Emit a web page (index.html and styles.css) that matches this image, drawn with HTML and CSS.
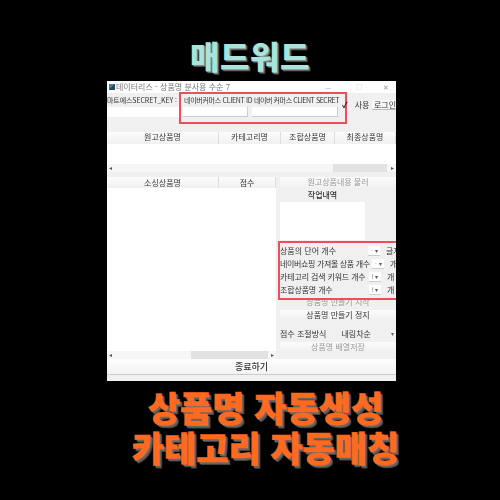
FILE: index.html
```html
<!DOCTYPE html>
<html lang="ko">
<head>
<meta charset="utf-8">
<title>매드워드</title>
<link rel="stylesheet" href="styles.css">
</head>
<body>
<h1 class="brand">매드워드</h1>
<main class="win">
  <div class="titlebar">
    <span class="appicon"></span>
    <span class="apptitle">데이터리스 - 상품명 분사용 수순 7</span>
    <span class="winctl"><span class="minbtn">—</span><span class="maxbtn"></span><span class="closebtn">✕</span></span>
  </div>
  <div class="keys">
    <div class="keycol keycol-a"><span class="lbl">마트에스SECRET_KEY :</span><span class="field field-a"></span></div>
    <div class="keycol keycol-b"><span class="lbl">네이버커머스 CLIENT ID</span><span class="field field-b"></span></div>
    <div class="keycol keycol-c"><span class="lbl">네이버 커머스 CLIENT SECRET</span><span class="field field-c"></span></div>
    <div class="login"><span class="check">✓</span><span class="use">사용</span><span class="loginbtn">로그인</span></div>
  </div>
  <div class="head head-top">
    <span class="c1">원고상품명</span><span class="c2">카테고리명</span><span class="c3">조합상품명</span><span class="c4">최종상품명</span>
  </div>
  <div class="tablebody"></div>
  <div class="hscroll hscroll-top"><span class="arrow">◂</span><span class="track track-top"><span class="thumb thumb-top"></span></span><span class="arrow">▸</span></div>
  <div class="lower">
    <section class="listcol">
      <div class="head head-list"><span class="c1">소싱상품명</span><span class="c2b">점수</span></div>
      <div class="listbody"></div>
      <div class="hscroll"><span class="arrow">◂</span><span class="track track-low"><span class="thumb thumb-low"></span></span><span class="arrow">▸</span></div>
    </section>
    <aside class="side">
      <div class="btn btn-first muted">원고상품내용 불러</div>
      <div class="worktitle">작업내역</div>
      <div class="worklog"></div>
      <div class="opts">
        <div class="opt"><span class="optname">상품의 단어 개수</span><span class="spin">· ▾</span><span class="unit">글자</span></div>
        <div class="opt"><span class="optname optname-wide">네이버쇼핑 가져올 상품 개수</span><span class="spin">· ▾</span><span class="unit">개</span></div>
        <div class="opt"><span class="optname optname-mid">카테고리 검색 키워드 개수</span><span class="spin">! ▾</span><span class="unit">개</span></div>
        <div class="opt"><span class="optname optname-mid">조합상품명 개수</span><span class="spin">! ▾</span><span class="unit">개</span></div>
      </div>
      <div class="startline muted">상품명 만들기 시작</div>
      <div class="btn btn-stop">상품명 만들기 정지</div>
      <div class="scorerow"><span>점수 조절방식</span><span class="select">내림차순<span class="caret">▾</span></span></div>
      <div class="btn btn-save muted">상품명 배열저장</div>
    </aside>
  </div>
  <div class="footer">종료하기</div>
  <div class="mark mark-keys"></div>
  <div class="mark mark-opts"></div>
</main>
<p class="promo">상품명 자동생성<br>카테고리 자동매칭</p>
</body>
</html>
```
FILE: styles.css
```css
* { box-sizing: border-box; }
html, body { margin: 0; height: 500px; overflow: hidden; }
body {
  background: #000;
  font-family: "Noto Sans CJK KR", "Noto Sans", sans-serif;
  display: flex;
  flex-direction: column;
  align-items: flex-start;
}
.brand {
  width: 500px;
  height: 81px;
  margin: 0;
  padding-top: 33px;
  text-align: center;
  font-size: 32px;
  line-height: 44px;
  letter-spacing: 0.5px;
  font-weight: 900;
  color: #a9e4dc;
  text-shadow: 1px 1px 0 #888, 2px 2px 1px #555;
}
.win {
  position: relative;
  width: 289px;
  height: 300px;
  margin-left: 107px;
  background: #f0f0f0;
  color: #333;
  font-size: 8px;
  line-height: 10px;
  overflow: hidden;
  display: flex;
  flex-direction: column;
  filter: blur(0.35px);
}
.titlebar {
  height: 12px;
  background: #fff;
  display: flex;
  align-items: center;
  padding-left: 2px;
  color: #777;
}
.appicon { width: 6px; height: 6px; background: linear-gradient(135deg, #2d8a9a 50%, #345 50%); margin-right: 1px; }
.apptitle { white-space: nowrap; }
.winctl { margin-left: auto; display: flex; color: #999; font-size: 7px; }
.minbtn { width: 10px; margin-right: 21px; }
.maxbtn { width: 6px; height: 6px; border: 1px solid #eee; margin: 2px 21px 0 0; }
.closebtn { width: 13px; }
.keys { height: 26px; display: flex; }
.keycol { display: flex; flex-direction: column; white-space: nowrap; flex: none; }
.lbl { height: 14px; line-height: 12px; padding-top: 1px; font-size: 7px; letter-spacing: -0.1px; }
.field { display: block; height: 10px; background: #fff; }
.keycol-a { width: 76px; }
.field-a { width: 72px; }
.keycol-b { width: 69px; }
.field-b { width: 65px; border-right: 1px solid #ccc; border-bottom: 1px solid #ccc; }
.keycol-b .lbl { padding-left: 1px; letter-spacing: -0.3px; }
.keycol-c { width: 89px; }
.keycol-c .lbl { padding-left: 2px; letter-spacing: -0.42px; }
.field-c { width: 86px; border-right: 1px solid #ccc; border-bottom: 1px solid #ccc; }
.login { position: relative; z-index: 1; flex: 1; display: flex; align-items: flex-start; padding-top: 7px; white-space: nowrap; min-width: 0; }
.check { width: 8px; margin: 0 5px 0 1px; font-weight: 700; color: #222; }
.use { width: 18px; }
.loginbtn { border-bottom: 1px solid #bbb; background: #f8f8f8; flex: 1; height: 10px; padding-left: 2px; }
.head {
  display: flex;
  height: 12px;
  margin-top: 13px;
  background: linear-gradient(#fcfcfc, #f0f0f0);
  text-align: center;
  white-space: nowrap;
}
.head span { border-right: 1px solid #ddd; }
.c1 { width: 112px; }
.c2 { width: 62px; }
.c3 { width: 54px; }
.c4 { flex: 1; }
.c2b { width: 57px; }
.tablebody { height: 20px; background: #fff; }
.hscroll {
  height: 8px;
  display: flex;
  align-items: center;
  background: #f6f6f6;
  color: #555;
  font-size: 6px;
  line-height: 8px;
}
.arrow { width: 7px; text-align: center; }
.track { flex: 1; height: 8px; display: flex; justify-content: flex-end; }
.thumb { display: block; height: 8px; background: #e2e2e2; }
.thumb-top { width: 54px; margin-right: 2px; }
.thumb-low { width: 77px; margin-right: 1px; }
.lower { display: flex; margin-top: 3px; height: 184px; flex: none; }
.listcol { width: 169px; display: flex; flex-direction: column; }
.head-list { margin-top: 2px; height: 11px; line-height: 11px; }
.listbody { flex: 1; background: #fff; }
.side { flex: 1; min-width: 0; padding: 2px 0 0 4px; white-space: nowrap; display: flex; flex-direction: column; }
.btn { height: 11px; background: linear-gradient(#fcfcfc, #f0f0f0); text-align: center; flex: none; width: 116px; }
.muted { color: #999; }
.worktitle { height: 14px; line-height: 14px; text-align: center; width: 85px; font-weight: 500; }
.worklog { width: 85px; height: 38px; background: #fff; }
.opts { margin-top: 6px; display: flex; flex-direction: column; gap: 3px; }
.opt { display: flex; height: 10px; width: 116px; overflow: hidden; }
.optname { width: 88px; flex: none; overflow: hidden; }
.optname-wide { width: 92px; letter-spacing: -0.35px; }
.optname-mid { width: 89px; letter-spacing: -0.15px; }
.spin { background: #fff; border-bottom: 1px solid #ccc; width: 12px; flex: none; font-size: 6px; text-align: center; color: #555; }
.unit { margin-left: 6px; flex: none; width: 10px; overflow: hidden; }
.startline { height: 10px; margin-top: 2px; text-align: center; width: 116px; }
.btn-stop { margin-top: 3px; height: 10px; }
.scorerow { display: flex; height: 22px; padding-top: 5px; align-items: center; width: 116px; }
.select { margin-left: 13px; flex: 1; display: flex; justify-content: space-between; padding: 0 2px; }
.caret { color: #666; font-size: 6px; }
.btn-save { height: 10px; }
.footer {
  height: 16px;
  background: linear-gradient(#fcfcfc, #f3f3f3);
  border-bottom: 1px solid #ccc;
  text-align: center;
  line-height: 15px;
  font-size: 9px;
  font-weight: 500;
  flex: none;
}
.mark { position: absolute; border: 2px solid #e8505a; pointer-events: none; }
.mark-keys { left: 72px; top: 11px; width: 168px; height: 32px; }
.mark-opts { left: 171px; top: 160px; width: 125px; height: 59px; }
.promo {
  width: 500px;
  margin: 6px 0 0;
  padding-left: 31px;
  text-align: center;
  font-size: 35px;
  line-height: 40px;
  font-weight: 900;
  color: #ff6a1f;
  -webkit-text-stroke: 0.5px #ff6a1f;
  text-shadow: 2px 2px 0 #666, 3px 3px 0 #444;
}
```
